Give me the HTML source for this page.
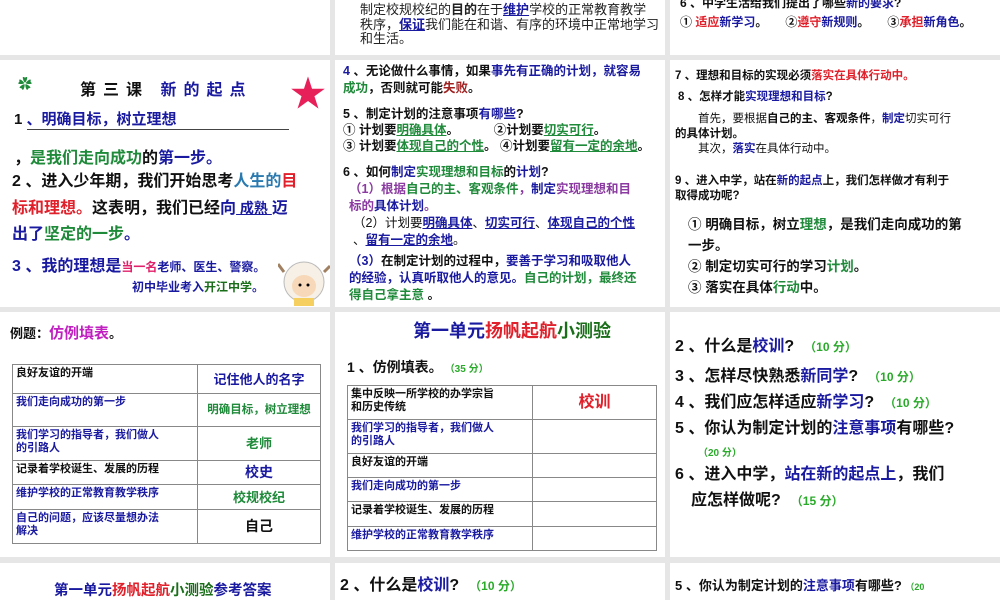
<!DOCTYPE html>
<html><head><meta charset="utf-8"><style>
body{margin:0;width:1000px;height:600px;background:#e6e6e6;position:relative;overflow:hidden;font-family:"Liberation Sans","Noto Sans CJK SC",sans-serif;font-weight:bold;color:#111}
.p{position:absolute;background:#fff;overflow:hidden}
.a{position:absolute;white-space:nowrap}
.b{color:#1a1aa0}.g{color:#1f8a3a}.r{color:#e0202a}.pu{color:#8a3aa0}.lb{color:#2a7ab0}.dg{color:#1a6e1a}.gg{color:#2aaa2a}
.n{font-weight:normal}
u{text-decoration-thickness:1px}
table{position:absolute;border-collapse:collapse}
td{border:1px solid #888;padding:2px 3px;vertical-align:top;line-height:13px}
</style></head><body>
<!-- row0 -->
<div class="p" style="left:0;top:0;width:330px;height:55px"></div>
<div class="p" style="left:335px;top:0;width:330px;height:55px">
 <div class="a n" style="left:25px;top:3px;font-size:13px;line-height:14.5px;color:#222">制定校规校纪的<b>目的</b>在于<u class="b" style="font-weight:bold">维护</u>学校的正常教育教学<br>秩序，<u class="b" style="font-weight:bold">保证</u>我们能在和谐、有序的环境中正常地学习<br>和生活。</div>
</div>
<div class="p" style="left:670px;top:0;width:330px;height:55px">
 <div class="a" style="left:10px;top:-6px;font-size:12px">6 、中学生活给我们提出了哪些<span class="b">新的要求</span>?</div>
 <div class="a" style="left:10px;top:13px;font-size:12px">① <span class="r">适应</span><span class="b">新学习</span>。　　②<span class="r">遵守</span><span class="b">新规则</span>。　　③<span class="r">承担</span><span class="b">新角色</span>。</div>
</div>
<!-- row1 col1 -->
<div class="p" style="left:0;top:60px;width:330px;height:247px">
 <div class="a g" style="left:18px;top:14px;font-size:14px">✿</div>
 <div class="a" style="left:80px;top:16px;font-size:16px;letter-spacing:7px">第三课 <span class="b">新的起点</span></div>
 <div class="a" style="left:290px;top:5px;font-size:36px;color:#e8205a;font-weight:normal">★</div>
 <div class="a" style="left:14px;top:48px;font-size:15px">1 <span class="b" style="display:inline-block;width:262px;border-bottom:1px solid #444">、明确目标，树立理想</span></div>
 <div class="a" style="left:14px;top:84px;font-size:16px">，<span class="g">是我们走向成功</span>的<span class="b">第一步。</span></div>
 <div class="a" style="left:12px;top:109px;font-size:16px;line-height:26px">2 、进入少年期，我们开始思考<span class="lb">人生的</span><span class="r">目</span><br><span class="r">标和理想。</span>这表明，我们已经<span class="b">向<u style="font-size:14px">&nbsp;成熟&nbsp;</u>迈</span><br><span class="b">出了</span><span class="g">坚定的一步</span><span class="b">。</span></div>
 <div class="a b" style="left:12px;top:192px;font-size:16px">3 、我的理想是<span style="font-size:12px"><span style="color:#e0206a">当一名</span>老师、医生、警察。</span></div>
 <div class="a b" style="left:132px;top:218px;font-size:12px">初中毕业考入<span class="dg">开江中学</span>。</div>
 <svg class="a" style="left:278px;top:192px" width="52" height="55"><ellipse cx="26" cy="30" rx="20" ry="20" fill="#f6f0e6" stroke="#bbb"/><ellipse cx="26" cy="34" rx="12" ry="11" fill="#f7d8b8"/><circle cx="22" cy="33" r="1.5"/><circle cx="30" cy="33" r="1.5"/><path d="M6 20 L0 12 M46 20 L52 14" stroke="#a08060" stroke-width="3"/><rect x="16" y="46" width="20" height="8" fill="#f5d060"/></svg>
</div>
<!-- row1 col2 -->
<div class="p" style="left:335px;top:60px;width:330px;height:247px">
 <div class="a" style="left:8px;top:3px;font-size:12.5px;line-height:17px"><span class="b">4</span> 、无论做什么事情，如果<span class="b">事先有正确的计划，就容易</span><br><span class="g">成功</span>，否则就可能<span style="color:#a02020">失败</span>。</div>
 <div class="a" style="left:8px;top:43px;font-size:12.5px">5 、制定计划的注意事项<span class="b">有哪些</span>?</div>
 <div class="a" style="left:8px;top:62px;font-size:12.5px;line-height:16px">① 计划要<u class="g">明确具体</u>。　　　 ②计划要<u class="g">切实可行</u>。<br>③ 计划要<u class="g">体现自己的个性</u>。 ④计划要<u class="g">留有一定的余地</u>。</div>
 <div class="a" style="left:8px;top:101px;font-size:12.5px">6 、如何<span class="b">制定</span><span class="g">实现理想和目标</span>的<span class="b">计划</span>?</div>
 <div class="a pu" style="left:14px;top:121px;font-size:12.5px;line-height:17px">（1）根据<span class="g">自己的主、客观条件</span>，<span class="b">制定</span>实现理想和目<br>标的<span class="b">具体计划</span>。</div>
 <div class="a n" style="left:18px;top:155px;font-size:12.5px;line-height:17px">（2）计划要<u class="b" style="font-weight:bold">明确具体</u>、<u class="b" style="font-weight:bold">切实可行</u>、<u class="b" style="font-weight:bold">体现自己的个性</u><br>、<u class="b" style="font-weight:bold">留有一定的余地</u>。</div>
 <div class="a" style="left:14px;top:193px;font-size:12.5px;line-height:17px"><span class="b">（3）</span>在制定计划的过程中，<span class="b">要善于学习和吸取他人</span><br><span class="b">的经验，认真听取他人的意见。</span><span class="g">自己的计划，最终还</span><br><span class="g">得自己拿主意</span> 。</div>
</div>
<!-- row1 col3 -->
<div class="p" style="left:670px;top:60px;width:330px;height:247px">
 <div class="a" style="left:5px;top:7px;font-size:11.5px">7 、理想和目标的实现必须<span class="r">落实在具体行动中。</span></div>
 <div class="a" style="left:8px;top:28px;font-size:11.5px">8 、怎样才能<span class="b">实现理想和目标</span>?</div>
 <div class="a n" style="left:5px;top:52px;font-size:11.5px;line-height:15px">　　首先，要根据<b>自己的主、客观条件</b>，<b class="b">制定</b>切实可行<br><b>的具体计划。</b><br>　　其次，<b class="b">落实</b>在具体行动中。</div>
 <div class="a" style="left:5px;top:114px;font-size:11.5px;line-height:15px">9 、进入中学，站在<span class="b">新的起点</span>上，我们怎样做才有利于<br>取得成功呢?</div>
 <div class="a" style="left:18px;top:154px;font-size:13.5px;line-height:21px">① 明确目标，树立<span class="g">理想</span>，是我们走向成功的第<br>一步。<br>② 制定切实可行的学习<span class="g">计划</span>。<br>③ 落实在具体<span class="g">行动</span>中。</div>
</div>
<!-- row2 col1 -->
<div class="p" style="left:0;top:312px;width:330px;height:245px">
 <div class="a" style="left:10px;top:10px;font-size:13px">例题：<span style="color:#c020c0;font-size:15px">仿例填表</span>。</div>
 <table style="left:12px;top:52px;width:309px;font-size:11px">
  <tr style="height:29px"><td style="width:178px">良好友谊的开端</td><td class="b" style="font-size:13px;text-align:center;vertical-align:middle">记住他人的名字</td></tr>
  <tr style="height:33px"><td class="b">我们走向成功的第一步</td><td class="g" style="font-size:11.5px;text-align:center;vertical-align:middle">明确目标，树立理想</td></tr>
  <tr style="height:34px"><td class="b">我们学习的指导者，我们做人<br>的引路人</td><td class="g" style="font-size:13px;text-align:center;vertical-align:middle">老师</td></tr>
  <tr style="height:24px"><td>记录着学校诞生、发展的历程</td><td class="b" style="font-size:14px;text-align:center;vertical-align:middle">校史</td></tr>
  <tr style="height:25px"><td class="b">维护学校的正常教育教学秩序</td><td class="g" style="font-size:13px;text-align:center;vertical-align:middle">校规校纪</td></tr>
  <tr style="height:34px"><td class="b">自己的问题，应该尽量想办法<br>解决</td><td style="font-size:14px;text-align:center;vertical-align:middle">自己</td></tr>
 </table>
</div>
<!-- row2 col2 -->
<div class="p" style="left:335px;top:312px;width:330px;height:245px">
 <div class="a b" style="left:78px;top:5px;font-size:18px">第一单元<span class="r">扬帆起航</span><span class="dg">小测验</span></div>
 <div class="a" style="left:12px;top:45px;font-size:14px">1 、仿例填表。　<span class="gg" style="font-size:10px">（35 分）</span></div>
 <table style="left:12px;top:73px;width:310px;font-size:11px">
  <tr style="height:34px"><td style="width:178px">集中反映一所学校的办学宗旨<br>和历史传统</td><td class="r" style="font-size:16px;text-align:center;vertical-align:middle">校训</td></tr>
  <tr style="height:34px"><td class="b">我们学习的指导者，我们做人<br>的引路人</td><td></td></tr>
  <tr style="height:24px"><td>良好友谊的开端</td><td></td></tr>
  <tr style="height:24px"><td class="b">我们走向成功的第一步</td><td></td></tr>
  <tr style="height:25px"><td>记录着学校诞生、发展的历程</td><td></td></tr>
  <tr style="height:24px"><td class="b">维护学校的正常教育教学秩序</td><td></td></tr>
 </table>
</div>
<!-- row2 col3 -->
<div class="p" style="left:670px;top:312px;width:330px;height:245px">
 <div class="a" style="left:5px;top:20px;font-size:16px;line-height:29px">2 、什么是<span class="b">校训</span>?　<span class="gg" style="font-size:12px">（10 分）</span></div>
 <div class="a" style="left:5px;top:52px;font-size:16px;line-height:26px">3 、怎样尽快熟悉<span class="b">新同学</span>?　<span class="gg" style="font-size:12px">（10 分）</span><br>4 、我们应怎样适应<span class="b">新学习</span>?　<span class="gg" style="font-size:12px">（10 分）</span><br>5 、你认为制定计划的<span class="b">注意事项</span>有哪些?</div>
 <div class="a gg" style="left:28px;top:132px;font-size:10px">（20 分）</div>
 <div class="a" style="left:5px;top:150px;font-size:16px;line-height:26px">6 、进入中学，<span class="b">站在新的起点上</span>，我们<br>　应怎样做呢?　<span class="gg" style="font-size:12px">（15 分）</span></div>
</div>
<!-- row3 -->
<div class="p" style="left:0;top:563px;width:330px;height:37px">
 <div class="a b" style="left:54px;top:16px;font-size:14.5px">第一单元<span class="r">扬帆起航</span><span class="dg">小测验</span>参考答案</div>
</div>
<div class="p" style="left:335px;top:563px;width:330px;height:37px">
 <div class="a" style="left:5px;top:8px;font-size:16px">2 、什么是<span class="b">校训</span>?　<span class="gg" style="font-size:12px">（10 分）</span></div>
</div>
<div class="p" style="left:670px;top:563px;width:330px;height:37px">
 <div class="a" style="left:5px;top:12px;font-size:13px">5 、你认为制定计划的<span class="b">注意事项</span>有哪些? <span class="gg" style="font-size:9px">（20</span></div>
</div>
</body></html>
